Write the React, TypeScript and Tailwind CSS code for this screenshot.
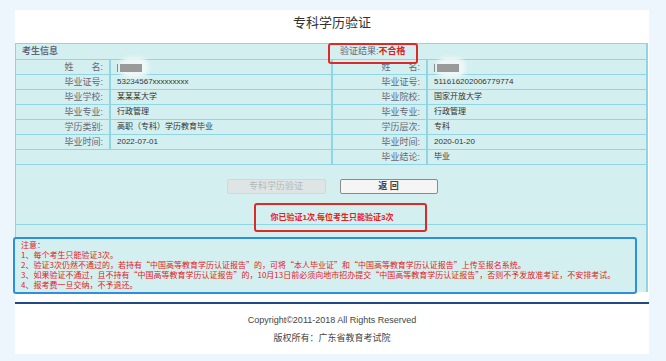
import type { ReactNode } from 'react';

const cjk = { fontFamily: '"Liberation Sans", "Noto Sans CJK SC", sans-serif' };
const cjkFirst = { fontFamily: '"Noto Sans CJK SC", "Liberation Sans", sans-serif' };

type Row = [string, ReactNode];

function Blurred() {
  return (
    <span className="relative inline-block h-[15px] w-[34px] align-top">
      <span className="absolute left-[2px] top-[-3px] h-[21px] w-[30px] rounded-full bg-[#eef7f7] blur-[2px]" />
      <span className="absolute left-0 top-[4px] h-[8px] w-[1px] bg-[#8a8a8a]" />
      <span className="absolute left-[3px] top-[4px] h-[8px] w-[22px] bg-[#9a9a9a] blur-[0.6px]" />
    </span>
  );
}

const left: Row[] = [
  ['姓\u3000\u3000名', <Blurred />],
  ['毕业证号', '53234567xxxxxxxxx'],
  ['毕业学校', '某某某大学'],
  ['毕业专业', '行政管理'],
  ['学历类别', '高职（专科）学历教育毕业'],
  ['毕业时间', '2022-07-01'],
];

const right: Row[] = [
  ['姓\u3000\u3000名', <Blurred />],
  ['毕业证号', '511616202006779774'],
  ['毕业院校', '国家开放大学'],
  ['毕业专业', '行政管理'],
  ['学历层次', '专科'],
  ['毕业时间', '2020-01-20'],
  ['毕业结论', '毕业'],
];

function InfoRow({ label, value }: { label: string; value: ReactNode }) {
  return (
    <div className="flex h-[15px] border-b border-[#8fd5e3]">
      <div className="w-[95px] shrink-0 border-r-2 border-[#8fd5e3] pr-[6px] text-right text-[9px] leading-[14px] text-[#667]">
        {label}:
      </div>
      <div className="pl-[6px] text-[8px] leading-[14px] text-[#333]">{value}</div>
    </div>
  );
}

export default function App() {
  return (
    <div className="min-h-[361px] bg-[#eef6fd] px-[15px] pt-[10px]" style={cjk}>
      <div className="w-[634px] bg-white pb-[10px]">
        {/* 标题 */}
        <div className="h-[33px] pt-[5px] text-center text-[13px] leading-[16px] text-[#333]">专科学历验证</div>

        <div className="w-[633px] border-l border-r-2 border-[#8fd5e3] bg-[#d3eff0]">
          {/* 表头 */}
          <div className="flex h-[17px] border-y border-[#8fd5e3]">
            <div className="w-[317px] pl-[6px] text-[9px] font-bold leading-[15px] text-[#667]">考生信息</div>
            <div className="relative pl-[7px] text-[9px] leading-[15px] text-[#667]">
              验证结果:<span className="font-bold text-[#e3201b]">不合格</span>
              <div className="absolute left-[-5px] top-[-1px] h-[21px] w-[90px] rounded-[3px] border-2 border-[#dc2a26]" />
            </div>
          </div>

          {/* 信息 */}
          <div className="flex">
            <div className="w-[317px] border-r-2 border-[#8fd5e3]">
              {left.map(([l, v]) => (
                <InfoRow key={l} label={l} value={v} />
              ))}
              <div className="h-[15px] border-b border-[#8fd5e3]" />
            </div>
            <div className="flex-1">
              {right.map(([l, v]) => (
                <InfoRow key={l} label={l} value={v} />
              ))}
            </div>
          </div>

          {/* 操作 */}
          <div className="relative h-[60px] border-b border-[#8fd5e3] pt-[14px]">
            <div className="flex justify-center gap-[14px] pl-[2px]">
              <button className="h-[15px] w-[99px] rounded-[2px] border border-[#d0d8d8] bg-[#dfe5e5] text-[9px] leading-[13px] text-[#b2b8b8]">
                专科学历验证
              </button>
              <button className="h-[15px] w-[98px] rounded-[2px] border border-[#8a8a8a] bg-[#f5f5f5] text-[9px] font-bold leading-[13px] text-[#444]">
                返 回
              </button>
            </div>
            <div className="mt-[19px] pl-[2px] text-center text-[8px] font-bold leading-[10px] text-[#e3201b]">
              你已验证1次,每位考生只能验证3次
            </div>
            <div className="absolute left-[238px] top-[38px] h-[29px] w-[173px] rounded-[3px] border-2 border-[#dc2a26]" />
          </div>

          {/* 注意 */}
          <div className="h-[67px] pr-[9px] pt-[12px]">
            <div
              className="relative z-10 -ml-[3px] h-[57px] rounded-[3px] border-2 border-[#2d8fe0] bg-[#d3eff0] pl-[6px] pt-[1px] text-[8px] leading-[10px] text-[#e3201b]"
              style={cjkFirst}
            >
              <div>注意：</div>
              <div>1、每个考生只能验证3次。</div>
              <div>2、验证3次仍然不通过的，若持有“中国高等教育学历认证报告”的，可将“本人毕业证”和“中国高等教育学历认证报告”上传至报名系统。</div>
              <div>3、如果验证不通过，且不持有“中国高等教育学历认证报告”的，10月13日前必须向地市招办提交“中国高等教育学历认证报告”，否则不予发放准考证，不安排考试。</div>
              <div>4、报考费一旦交纳，不予退还。</div>
            </div>
          </div>
        </div>

        {/* 页脚 */}
        <div className="mt-[10px] h-[2px] bg-[#1e4b86]" />
        <div className="pt-[10px] text-center text-[9px] leading-[12px] text-[#444]">
          Copyright©2011-2018 All Rights Reserved
        </div>
        <div className="pt-[6px] text-center text-[9px] leading-[12px] text-[#444]">版权所有：广东省教育考试院</div>
      </div>
    </div>
  );
}
